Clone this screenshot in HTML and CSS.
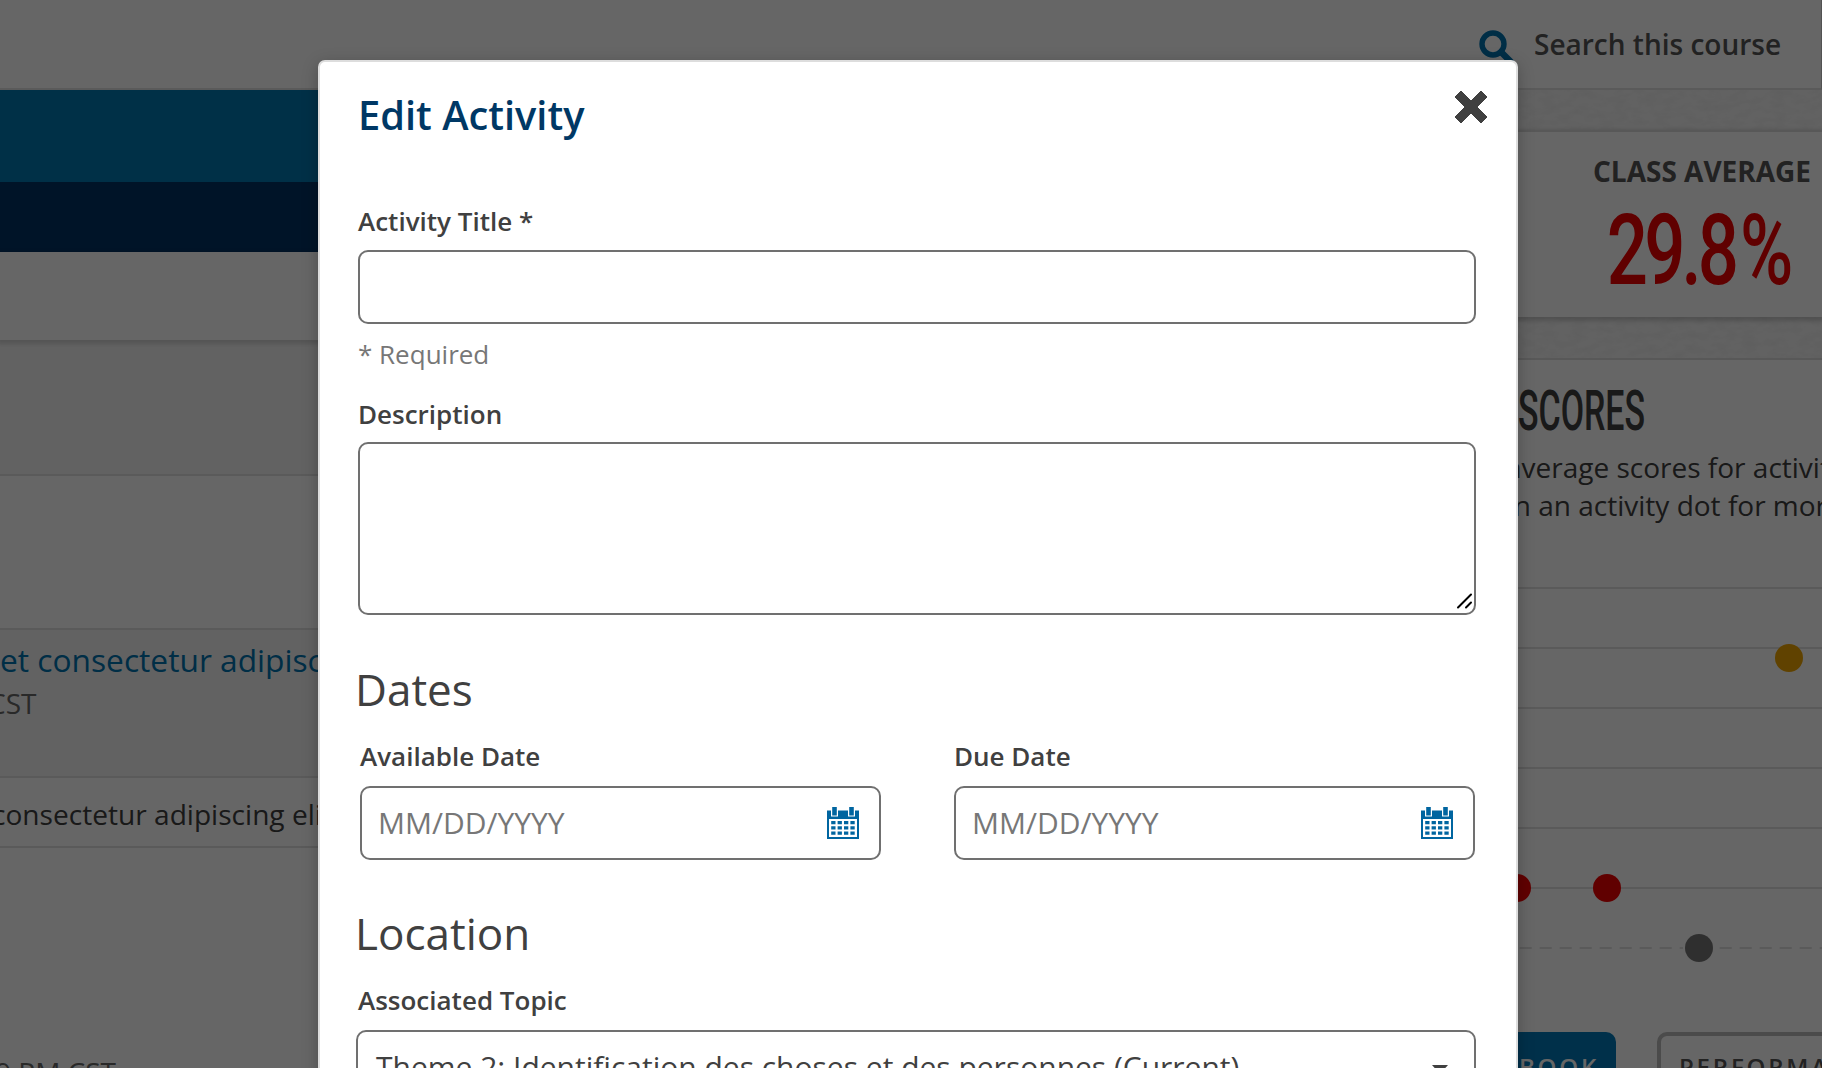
FILE: index.html
```html
<!DOCTYPE html>
<html lang="en">
<head>
<meta charset="utf-8">
<title>Edit Activity</title>
<link rel="stylesheet" href="styles.css">
</head>
<body>
<div class="page">
  <header class="topbar">
    <svg class="search-icon" viewBox="0 0 36 36"><circle cx="14" cy="14" r="11" fill="none" stroke="currentColor" stroke-width="5.4"/><path d="M22 22l10 10" stroke="currentColor" stroke-width="6.5" stroke-linecap="round"/></svg>
    <span class="search-label">Search this course</span>
  </header>
  <div class="columns">
    <main class="course">
      <div class="band band-blue"></div>
      <div class="band band-navy"></div>
      <div class="toolbar"></div>
      <div class="spacer"></div>
      <div class="panel-head"></div>
      <section class="item item-active">
        <a class="item-link">et consectetur adipiscing</a>
        <span class="item-time">CST</span>
      </section>
      <div class="item-row">consectetur adipiscing elit</div>
      <div class="item-foot">9 PM CST</div>
    </main>
    <aside class="side">
      <svg class="texture"><filter id="grain"><feTurbulence type="fractalNoise" baseFrequency="0.07 0.14" numOctaves="3"/><feColorMatrix values="0 0 0 0 0  0 0 0 0 0  0 0 0 0 0  .5 0 0 0 -.16"/></filter><rect width="100%" height="100%" filter="url(#grain)" opacity=".12"/></svg>
      <section class="card average">
        <h3 class="average-title">CLASS AVERAGE</h3>
        <svg class="average-value" width="190" height="76"><text transform="scale(.74 1)" x="-3 47.500 98 120 177" y="72">29.8%</text></svg>
      </section>
      <section class="card scores">
        <svg class="scores-title" width="132" height="44"><text x="0" y="41" textLength="127" lengthAdjust="spacingAndGlyphs">SCORES</text></svg>
        <p class="scores-text">average scores for activities<br><span class="second">on an activity dot for more</span></p>
        <svg class="chart" width="322" height="390" viewBox="1500 580 322 390">
          <g class="grid-lines"><path d="M1500 588H1822M1500 648H1822M1500 708H1822M1500 768H1822M1500 828H1822M1500 888H1822"/><path d="M1499.700 948H1822" stroke-dasharray="12 8"/></g>
          <circle class="dot-amber" cx="1789" cy="658" r="14"/>
          <circle class="dot-red" cx="1517" cy="888" r="14"/>
          <circle class="dot-red" cx="1607" cy="888" r="14"/>
          <circle class="dot-halo" cx="1699" cy="948" r="16"/>
          <circle class="dot-gray" cx="1699" cy="948" r="14"/>
        </svg>
        <div class="actions">
          <span class="btn btn-primary">BOOK</span>
          <span class="btn btn-outline">PERFORMANCE</span>
        </div>
      </section>
    </aside>
  </div>
</div>

<div class="overlay">
  <div class="modal">
    <svg class="close" viewBox="0 0 32 32"><path d="M6 0L16 10L26 0L32 6L22 16L32 26L26 32L16 22L6 32L0 26L10 16L0 6Z" fill="currentColor" stroke="currentColor" stroke-linejoin="round"/></svg>
    <h1 class="modal-title">Edit Activity</h1>
    <label class="label">Activity Title *</label>
    <input class="field" type="text">
    <p class="hint">* Required</p>
    <label class="label description-label">Description</label>
    <div class="area-wrap">
      <textarea class="field area"></textarea>
      <svg class="grip" viewBox="0 0 18 18"><path d="M2 15.500L15 2.500M10 15.500L15 10.500" stroke="#000" stroke-width="2" stroke-linecap="round"/></svg>
    </div>
    <h2 class="section-title">Dates</h2>
    <div class="dates">
      <div class="date">
        <label class="label">Available Date</label>
        <div class="field date-field"><span>MM/DD/YYYY</span>
          <svg class="calendar" viewBox="0 0 32 32"><use href="#calendar"/></svg></div>
      </div>
      <div class="date">
        <label class="label">Due Date</label>
        <div class="field date-field"><span>MM/DD/YYYY</span>
          <svg class="calendar" viewBox="0 0 32 32"><use href="#calendar"/></svg></div>
      </div>
    </div>
    <h2 class="section-title location-title">Location</h2>
    <label class="label topic-label">Associated Topic</label>
    <div class="field select"><span class="select-text">Theme 2: Identification des choses et des personnes (Current)</span><svg class="caret" viewBox="0 0 16 9"><path d="M0 0H16L8 9Z" fill="currentColor"/></svg></div>
  </div>
</div>

<svg class="defs">
  <symbol id="calendar" viewBox="0 0 32 32">
    <path fill="currentColor" fill-rule="evenodd" d="M0 3.500H4V9.500H11V3.500H21V9.500H28V3.500H32V32H0ZM2 12V30H30V12Z"/>
    <path fill="currentColor" d="M5.200 0h4.600v8.500H5.200zM22.200 0h4.600v8.500h-4.600z"/>
    <path stroke="currentColor" stroke-width="3.200" stroke-dasharray="4.300 2.100" d="M4.200 15.600H28.200M4.200 20.900H28.200M4.200 26.200H28.200"/>
  </symbol>
</svg>
</body>
</html>
```
FILE: styles.css
```css
* { box-sizing: border-box; }
body { margin: 0; height: 1068px; overflow: hidden; position: relative; font-family: "Open Sans", sans-serif; color: #404040; background: #fff; }
h1, h2, h3, p { margin: 0; font-weight: 400; }
.defs { display: none; }

/* Course page */
.page { height: 1068px; overflow: hidden; }
.topbar { height: 90px; border-bottom: 2px solid #e0e0e0; border-right: 1px solid #ccc; display: flex; align-items: flex-start; justify-content: flex-end; padding-right: 40px; }
.search-icon { width: 36px; height: 36px; margin: 30px 19px 0 0; color: #0073b0; }
.search-label { font-size: 28px; line-height: 40px; font-weight: 600; margin-top: 24px; color: #555; white-space: nowrap; width: 247px; }
.columns { display: grid; grid-template-columns: 1500px 322px; height: 978px; }

.course { min-width: 0; overflow: hidden; background: #fff; }
.band-blue { height: 92px; background: #0078b2; }
.band-navy { height: 70px; background: #003264; }
.toolbar { height: 88px; position: relative; box-shadow: 0 2px 4px 2px rgba(0, 0, 0, .14); background: #fff; }
.spacer { height: 134px; background: #f5f5f5; }
.panel-head { height: 156px; border: solid #e0e0e0; border-width: 2px 0; }
.item-active { height: 148px; background: #f5f5f5; border-bottom: 2px solid #e0e0e0; padding-top: 8px; display: flex; flex-direction: column; white-space: nowrap; }
.item-link { color: #0073b0; font-size: 31.700px; line-height: 44px; }
.item-time { color: #666; font-size: 28px; line-height: 36px; margin: 3px 0 0 -12px; }
.item-row { height: 70px; border-bottom: 2px solid #e0e0e0; font-size: 28.100px; line-height: 40px; padding-top: 16px; text-indent: -8px; white-space: nowrap; }
.item-foot { color: #666; font-size: 28px; line-height: 36px; margin: 206px 0 0 -5px; }

.side { position: relative; z-index: 1; overflow: hidden; background: #f5f5f5; padding-top: 40px; }
.texture { position: absolute; left: 0; top: 0; width: 322px; height: 270px; }
.card { position: relative; background: #fff; border-top: 2px solid #dcdcdc; }
.average { height: 187px; box-shadow: 0 2px 4px 2px rgba(0, 0, 0, .17); padding: 18px 0 0 93px; }
.average-title { font-size: 28px; line-height: 42px; font-weight: 700; color: #555; white-space: nowrap; }
.average-value { display: block; margin: 20px 0 0 16px; overflow: visible; }
.average-value text { font-family: Roboto, sans-serif; font-size: 98px; font-weight: 500; fill: #f00000; }
.scores { margin-top: 41px; height: 712px; }
.scores-title { display: block; margin: 29px 0 0 18px; overflow: visible; }
.scores-title text { font-family: Roboto, sans-serif; font-size: 55px; font-weight: 500; fill: #404040; }
.scores-text { font-size: 28px; line-height: 38px; white-space: nowrap; margin: 15px 0 0 6px; }
.second { margin-left: -9px; }
.chart { display: block; margin-top: 56px; }
.grid-lines { stroke: #e0e0e0; stroke-width: 2; }
.dot-amber { fill: #f0a500; }
.dot-red { fill: #f00000; }
.dot-gray { fill: #777; }
.dot-halo { fill: #fff; }
.actions { display: flex; gap: 41px; margin-top: 62px; }
.btn { height: 74px; flex: none; font-size: 24px; line-height: 34px; font-weight: 600; letter-spacing: 2.800px; border-radius: 10px; }
.btn-primary { width: 116px; background: #0078b8; color: #fff; padding: 18px 0 0 19px; }
.btn-outline { width: 260px; border: 4px solid #bbb; padding: 14px 0 0 18px; color: #555; }

/* Dialog */
.overlay { position: absolute; inset: 0; z-index: 5; overflow: hidden; background: rgba(0, 0, 0, .6); padding: 60px 0 0 318px; }
.modal { position: relative; width: 1200px; height: 1100px; padding: 25px 40px 0 38px; background: #fff; border: 2px solid #ddd; border-radius: 7px; box-shadow: 0 4px 16px rgba(0, 0, 0, .25); display: flex; flex-direction: column; }
.close { position: absolute; left: 1135px; top: 29px; width: 32px; height: 32px; overflow: visible; }
.modal-title { font-size: 39.800px; line-height: 55px; font-weight: 600; color: #003865; margin-bottom: 61px; }
.label { display: block; font-size: 26px; line-height: 36px; font-weight: 600; margin-bottom: 11px; white-space: nowrap; }
.field { display: block; width: 100%; height: 74px; flex: none; border: 2px solid #707070; border-radius: 10px; background: #fff; outline: 0; }
.hint { font-size: 26px; line-height: 36px; color: #777; margin: 12px 0 24px; }
.description-label { margin-bottom: 10px; }
.area-wrap { position: relative; height: 173px; }
.area { height: 173px; resize: none; }
.grip { position: absolute; right: 2px; bottom: 5px; width: 18px; height: 18px; }
.section-title { font-size: 44px; line-height: 61px; margin: 44px 0 18px -3px; }
.dates { display: grid; grid-template-columns: 521px 521px; gap: 73px; margin-left: 2px; }
.date .label { margin-bottom: 12px; }
.date-field { display: flex; align-items: center; justify-content: space-between; padding: 0 20px 0 16px; font-size: 30px; line-height: 42px; color: #777; }
.calendar { width: 32px; height: 32px; color: #0065a0; }
.location-title { margin-top: 43px; }
.topic-label { margin-bottom: 12px; }
.select { margin-left: -2px; width: 1120px; display: flex; justify-content: space-between; padding: 14px 26px 0 18px; font-size: 30px; line-height: 42px; white-space: nowrap; }
.caret { width: 16px; height: 9px; margin-top: 19px; }
```
